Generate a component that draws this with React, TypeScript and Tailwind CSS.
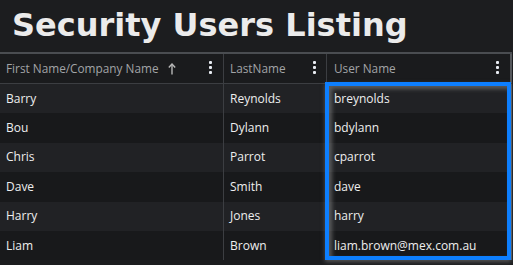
import React from "react";

const rows = [
  ["Barry", "Reynolds", "breynolds"],
  ["Bou", "Dylann", "bdylann"],
  ["Chris", "Parrot", "cparrot"],
  ["Dave", "Smith", "dave"],
  ["Harry", "Jones", "harry"],
  ["Liam", "Brown", "liam.brown@mex.com.au"],
];

function Kebab() {
  return (
    <div className="flex flex-col gap-[2px] -mt-[3px]">
      <span className="block w-[3px] h-[3px] rounded-[1px] bg-[#e8ecf2]" />
      <span className="block w-[3px] h-[3px] rounded-[1px] bg-[#e8ecf2]" />
      <span className="block w-[3px] h-[3px] rounded-[1px] bg-[#e8ecf2]" />
    </div>
  );
}

function UpArrow() {
  return (
    <svg width="8" height="12" viewBox="0 0 8 12" className="block">
      <path d="M4 11.5V1.2" stroke="#b8b8b8" strokeWidth="1.4" fill="none" />
      <path d="M0.8 4.4L4 1L7.2 4.4" stroke="#b8b8b8" strokeWidth="1.4" fill="none" strokeLinejoin="miter" />
    </svg>
  );
}

export default function App() {
  return (
    <div className="relative w-[513px] h-[265px] overflow-hidden bg-[#1c1d1f] font-['Open_Sans',sans-serif]">
      <div className="h-[52px] pl-[12px] pt-[7px]">
        <h1 className="font-['DejaVu_Sans',sans-serif] font-bold text-[32px] leading-[37px] text-[#ebebeb] whitespace-nowrap">
          Security Users Listing
        </h1>
      </div>
      <div className="border-t-2 border-[#4a4d51] w-[512px]">
        <div className="flex h-[29px] bg-[#1a1b1d] text-[11.8px] text-[#a2a4a7] font-medium">
          <div className="w-[224px] border-r border-[#3c3e42] flex items-center pl-[6px] pr-[11px]">
            <span>First Name/Company Name</span>
            <span className="ml-[9px]"><UpArrow /></span>
            <span className="ml-auto"><Kebab /></span>
          </div>
          <div className="w-[103px] border-r border-[#3c3e42] flex items-center pl-[6px] pr-[10px]">
            <span>LastName</span>
            <span className="ml-auto"><Kebab /></span>
          </div>
          <div className="w-[183px] flex items-center pl-[7px] pr-[11px]">
            <span>User Name</span>
            <span className="ml-auto"><Kebab /></span>
          </div>
          <div className="w-[2px] bg-[#55585c]" />
        </div>
        <div className="h-px bg-[#3c3e42]" />
        {rows.map((r, i) => (
          <div
            key={i}
            className={`flex h-[29.4px] text-[12px] font-medium text-[#eeeeee] ${i % 2 === 0 ? "bg-[#212225]" : "bg-[#18191b]"}`}
          >
            <div className="w-[224px] border-r border-[#3c3e42] flex items-center pl-[6px]">{r[0]}</div>
            <div className="w-[103px] border-r border-[#3c3e42] flex items-center pl-[6px]">{r[1]}</div>
            <div className="w-[183px] flex items-center pl-[7px] whitespace-nowrap">{r[2]}</div>
            <div className="w-[2px] bg-[#55585c]" />
          </div>
        ))}
      </div>
      <div className="absolute left-[325px] top-[82px] w-[186px] h-[178px] border-4 border-[#0d7fff] shadow-[inset_3px_3px_4px_rgba(140,140,140,0.55),0_2px_4px_rgba(120,120,120,0.6)] pointer-events-none" />
    </div>
  );
}
